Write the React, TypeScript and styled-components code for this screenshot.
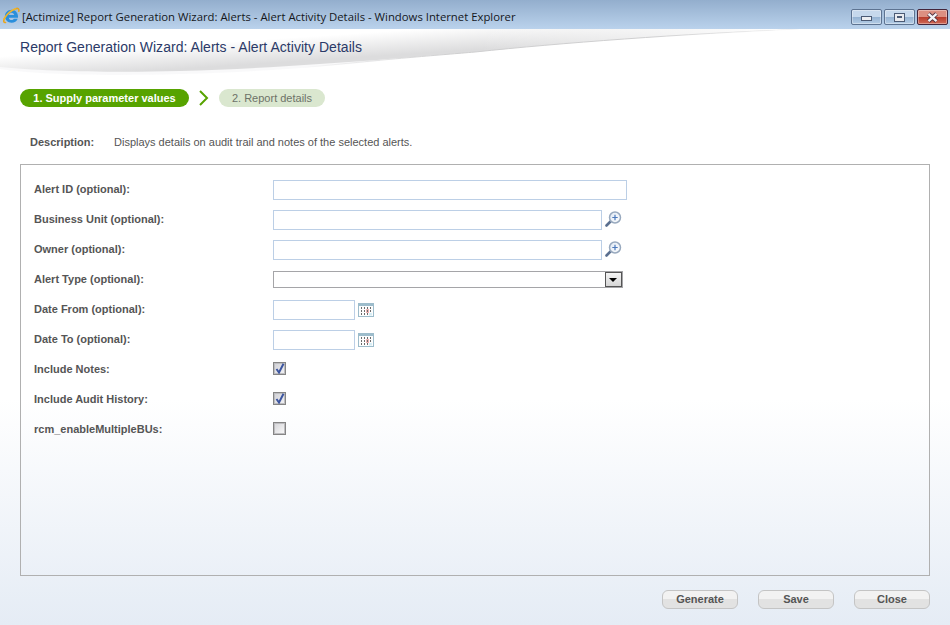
import styled, { createGlobalStyle } from 'styled-components'

const GlobalStyle = createGlobalStyle`
  html, body {
    margin: 0;
    padding: 0;
    width: 950px;
    height: 625px;
    overflow: hidden;
  }
`

const IeLogo = () => (
  <svg width="18" height="18" viewBox="0 0 18 18">
    <path d="M3.500 15.500C1.800 15.800 1.300 14.300 2.300 12M13.500 1.800C15.800 .8 17.300 1.500 16.800 4.200" fill="none" stroke="#e8a51c" strokeWidth="1.600" strokeLinecap="round" />
    <path d="M9.600 2.800c-3.700 0-6.700 2.900-6.700 6.500s3 6.500 6.700 6.500c2.800 0 5.200-1.600 6.100-4h-3.800c-.5.800-1.300 1.300-2.300 1.300-1.500 0-2.600-1-2.800-2.400h9.100c.1-.4.100-.9.100-1.300 0-3.700-2.700-6.600-6.400-6.600zM6.900 8c.2-1.300 1.300-2.300 2.700-2.300S12 6.700 12.200 8z" fill="#2a8fdc" />
    <path d="M2 12C4.500 7.500 8.500 3.800 13.500 1.800" fill="none" stroke="#efb52c" strokeWidth="1.700" strokeLinecap="round" />
  </svg>
)

const MagnifierIcon = () => (
  <svg width="17" height="16" viewBox="0 0 17 16">
    <defs>
      <linearGradient id="lensFill" x1="0" y1="0" x2="1" y2="1">
        <stop offset="0" stopColor="#dfe8f3" />
        <stop offset="1" stopColor="#ffffff" />
      </linearGradient>
    </defs>
    <path d="M1.500 14.500 5.500 10.500" stroke="#5a6f8f" strokeWidth="2.600" strokeLinecap="round" />
    <circle cx="10" cy="6.500" r="5.500" fill="url(#lensFill)" stroke="#98a9be" strokeWidth="1.500" />
    <path d="M10 3.800v5.400M7.300 6.500h5.400" stroke="#4a78bb" strokeWidth="1.200" />
  </svg>
)

const CalendarIcon = () => (
  <svg width="16" height="14" viewBox="0 0 16 14">
    <rect width="16" height="14" fill="#9dbccb" />
    <rect x="1" y="3" width="14" height="10" fill="#fdfdfd" />
    <rect x="8" y="6" width="3" height="4" fill="#f2b4b4" />
    <rect x="11" y="10" width="3" height="2.500" fill="#d6eef6" />
    <path d="M3.500 4v2M6.500 4v2M9.500 4v2M12.500 4v2M3.500 7v2M6.500 7v2M9.500 7v2M12.500 7v2M3.500 10v2M6.500 10v2M9.500 10v2" stroke="#6b6b6b" strokeWidth="1" />
  </svg>
)

const Checkmark = () => (
  <svg width="10" height="11" viewBox="0 0 10 11">
    <path d="M1.500 6 4 9.500 8.500 .8" fill="none" stroke="#3c55a0" strokeWidth="2" />
  </svg>
)

const CloseCross = () => (
  <svg width="13" height="11" viewBox="0 0 13 11">
    <path d="M2.500 1.800 10.500 9.200M10.500 1.800 2.500 9.200" stroke="#4a2c3c" strokeWidth="4" />
    <path d="M2.500 1.800 10.500 9.200M10.500 1.800 2.500 9.200" stroke="#f4f4f6" strokeWidth="2.400" />
  </svg>
)

const swooshEdge = 'M0 38C40 42 110 44 180 42 290 39 400 29 475 23 560 14 680 5 800 0H0Z'

const Swoosh = () => (
  <SwooshSvg width="950" height="48" viewBox="0 0 950 48">
    <defs>
      <linearGradient id="swooshFill" gradientUnits="userSpaceOnUse" x1="300" y1="0" x2="302.600" y2="40">
        <stop offset="0.2" stopColor="#ffffff" />
        <stop offset="0.8" stopColor="#dcdcdd" />
      </linearGradient>
      <linearGradient id="swooshFade" gradientUnits="userSpaceOnUse" x1="480" y1="0" x2="780" y2="0">
        <stop offset="0" stopColor="#ffffff" stopOpacity="0" />
        <stop offset="1" stopColor="#ffffff" stopOpacity="1" />
      </linearGradient>
      <linearGradient id="swooshLine" gradientUnits="userSpaceOnUse" x1="300" y1="0" x2="800" y2="0">
        <stop offset="0" stopColor="#cfcfd0" stopOpacity="0" />
        <stop offset="0.3" stopColor="#cfcfd0" stopOpacity="1" />
        <stop offset="0.7" stopColor="#cfcfd0" stopOpacity="1" />
        <stop offset="1" stopColor="#cfcfd0" stopOpacity="0" />
      </linearGradient>
    </defs>
    <path d="M0 40C40 46 110 47 180 45 260 43 320 38 380 32L380 20H0Z" fill="#f7f7f8" opacity="0.7" />
    <path d={swooshEdge} fill="url(#swooshFill)" />
    <path d={swooshEdge} fill="url(#swooshFade)" />
    <path d="M300 39C400 29 440 26 475 23 560 14 680 5 800 0" fill="none" stroke="url(#swooshLine)" strokeWidth="1" />
  </SwooshSvg>
)

const fields = [
  { label: 'Alert ID (optional):', kind: 'wide' },
  { label: 'Business Unit (optional):', kind: 'lookup' },
  { label: 'Owner (optional):', kind: 'lookup' },
  { label: 'Alert Type (optional):', kind: 'select' },
  { label: 'Date From (optional):', kind: 'date' },
  { label: 'Date To (optional):', kind: 'date' },
  { label: 'Include Notes:', kind: 'checked' },
  { label: 'Include Audit History:', kind: 'checked' },
  { label: 'rcm_enableMultipleBUs:', kind: 'unchecked' },
]

const renderControl = (kind: string) => {
  switch (kind) {
    case 'wide':
      return <TextBox $width={354} />
    case 'lookup':
      return (
        <>
          <TextBox $width={329} />
          <LookupButton>
            <MagnifierIcon />
          </LookupButton>
        </>
      )
    case 'select':
      return (
        <SelectBox>
          <SelectArrow />
        </SelectBox>
      )
    case 'date':
      return (
        <>
          <TextBox $width={82} />
          <CalendarButton>
            <CalendarIcon />
          </CalendarButton>
        </>
      )
    case 'checked':
      return (
        <CheckBox>
          <Checkmark />
        </CheckBox>
      )
    default:
      return <CheckBox $empty />
  }
}

export default function App() {
  return (
    <Page>
      <GlobalStyle />
      <TitleBar>
        <IeLogo />
        <WindowTitle>
          [Actimize] Report Generation Wizard: Alerts - Alert Activity Details - Windows Internet Explorer
        </WindowTitle>
        <WindowControls>
          <WindowButton>
            <MinimizeGlyph />
          </WindowButton>
          <WindowButton>
            <MaximizeGlyph />
          </WindowButton>
          <CloseButton>
            <CloseCross />
          </CloseButton>
        </WindowControls>
      </TitleBar>

      <Content>
        <Swoosh />
        <PageTitle>Report Generation Wizard: Alerts - Alert Activity Details</PageTitle>

        <Steps>
          <ActiveStep>1. Supply parameter values</ActiveStep>
          <svg width="10" height="16" viewBox="0 0 10 16">
            <path d="M1 1 8 8 1 15" fill="none" stroke="#57a300" strokeWidth="2" />
          </svg>
          <NextStep>2. Report details</NextStep>
        </Steps>

        <Description>
          <DescriptionLabel>Description:</DescriptionLabel>
          <span>Displays details on audit trail and notes of the selected alerts.</span>
        </Description>

        <FormPanel>
          {fields.map((field) => (
            <FormRow key={field.label}>
              <FieldLabel>{field.label}</FieldLabel>
              {renderControl(field.kind)}
            </FormRow>
          ))}
        </FormPanel>

        <Footer>
          <ActionButton>Generate</ActionButton>
          <ActionButton>Save</ActionButton>
          <ActionButton>Close</ActionButton>
        </Footer>
      </Content>
    </Page>
  )
}

const Page = styled.div`
  width: 950px;
  height: 625px;
  display: flex;
  flex-direction: column;
  font-family: 'Liberation Sans', Arial, sans-serif;
  background: #fff;
`

const TitleBar = styled.div`
  height: 29px;
  flex: none;
  display: flex;
  align-items: center;
  padding: 3px 0 0 2px;
  box-sizing: border-box;
  background: linear-gradient(#93aecd, #bad2ec);
`

const WindowTitle = styled.span`
  margin-left: 2px;
  font-family: 'Open Sans', sans-serif;
  font-size: 11.34px;
  color: #15171c;
  white-space: nowrap;
`

const WindowControls = styled.div`
  margin-left: auto;
  align-self: flex-start;
  display: flex;
  gap: 2px;
  padding: 6px 2px 0 0;
`

const WindowButton = styled.div`
  width: 29px;
  height: 14px;
  border: 1px solid #5d7391;
  border-radius: 2px;
  display: flex;
  align-items: center;
  justify-content: center;
  background: linear-gradient(#c6d8ec 50%, #94b2d2 50%, #b5cde6);
  box-shadow: inset 0 0 0 1px rgba(255, 255, 255, 0.35);
`

const CloseButton = styled(WindowButton)`
  border-color: #43253a;
  background: linear-gradient(#dc8f81 50%, #b73a2a 50%, #cf6a58);
`

const MinimizeGlyph = styled.div`
  width: 9px;
  height: 3px;
  margin-top: 3px;
  background: #eceef2;
  border: 1px solid #4b5a74;
`

const MaximizeGlyph = styled.div`
  width: 9px;
  height: 7px;
  border: 1px solid #4b5a74;
  background: #e8eaef;
  display: flex;
  align-items: center;
  justify-content: center;

  &::after {
    content: '';
    width: 5px;
    height: 2px;
    background: #4b5a74;
  }
`

const Content = styled.div`
  flex: 1;
  position: relative;
  display: flex;
  flex-direction: column;
  padding: 0 20px;
  background: linear-gradient(#fff 0, #fff 370px, #e5ecf5 100%);
`

const SwooshSvg = styled.svg`
  position: absolute;
  left: 0;
  top: 0;
`

const PageTitle = styled.h1`
  position: relative;
  margin: 10px 0 0;
  font-size: 14px;
  line-height: 16px;
  font-weight: 400;
  letter-spacing: 0.035px;
  color: #2b3a68;
`

const Steps = styled.div`
  position: relative;
  margin-top: 34px;
  display: flex;
  align-items: center;
  gap: 10px;
  height: 18px;
`

const ActiveStep = styled.div`
  width: 169px;
  height: 18px;
  border-radius: 9px;
  background: #57a300;
  color: #fff;
  font-size: 11px;
  font-weight: 700;
  line-height: 18px;
  text-align: center;
`

const NextStep = styled.div`
  width: 106px;
  height: 18px;
  border-radius: 9px;
  background: #dae7cf;
  color: #6d7268;
  font-size: 11px;
  line-height: 18px;
  text-align: center;
`

const Description = styled.div`
  margin-top: 28px;
  padding-left: 10px;
  height: 14px;
  display: flex;
  font-size: 11px;
  line-height: 14px;
  color: #555;
`

const DescriptionLabel = styled.span`
  width: 84px;
  font-weight: 700;
`

const FormPanel = styled.div`
  margin-top: 15px;
  width: 910px;
  height: 412px;
  box-sizing: border-box;
  border: 1px solid #b0b0b0;
  padding-top: 10px;
`

const FormRow = styled.div`
  height: 30px;
  display: flex;
  align-items: center;
  padding-left: 13px;
`

const FieldLabel = styled.label`
  width: 239px;
  flex: none;
  margin-bottom: 2px;
  font-size: 11px;
  font-weight: 700;
  color: #555;
`

const TextBox = styled.div<{ $width: number }>`
  width: ${(p) => p.$width}px;
  height: 20px;
  box-sizing: border-box;
  border: 1px solid #bccfe6;
  background: #fff;
`

const LookupButton = styled.div`
  display: flex;
  margin: -2px 0 0 3px;
`

const CalendarButton = styled.div`
  display: flex;
  margin-left: 3px;
`

const SelectBox = styled.div`
  width: 350px;
  height: 17px;
  margin-bottom: 2px;
  box-sizing: border-box;
  border: 1px solid #a5a5a8;
  background: #fff;
  display: flex;
  justify-content: flex-end;
`

const SelectArrow = styled.div`
  width: 17px;
  height: 15px;
  box-sizing: border-box;
  border: 1px solid #555;
  background: linear-gradient(#f4f4f4, #d6d6d6);
  position: relative;

  &::after {
    content: '';
    position: absolute;
    left: 3px;
    top: 5px;
    border-left: 4px solid transparent;
    border-right: 4px solid transparent;
    border-top: 4px solid #000;
  }
`

const CheckBox = styled.div<{ $empty?: boolean }>`
  width: 13px;
  height: 13px;
  margin-bottom: 4px;
  box-sizing: border-box;
  border: 1px solid #858585;
  box-shadow: inset 0 0 0 1px #bdbdc0;
  display: flex;
  align-items: center;
  justify-content: center;
  background: ${(p) => (p.$empty ? 'linear-gradient(135deg, #d4d4d8, #fafafa)' : 'linear-gradient(135deg, #cfcfd4, #f4f4f6)')};
`

const Footer = styled.div`
  margin-top: 14px;
  width: 910px;
  display: flex;
  justify-content: flex-end;
  gap: 20px;
`

const ActionButton = styled.button`
  width: 76px;
  height: 19px;
  padding: 0 0 2px;
  box-sizing: border-box;
  border: 1px solid #c4c4c4;
  border-radius: 6px;
  background: linear-gradient(#f2f2f2 50%, #e2e2e2 50%);
  font-family: 'Liberation Sans', Arial, sans-serif;
  font-size: 11px;
  font-weight: 700;
  color: #555;
`
